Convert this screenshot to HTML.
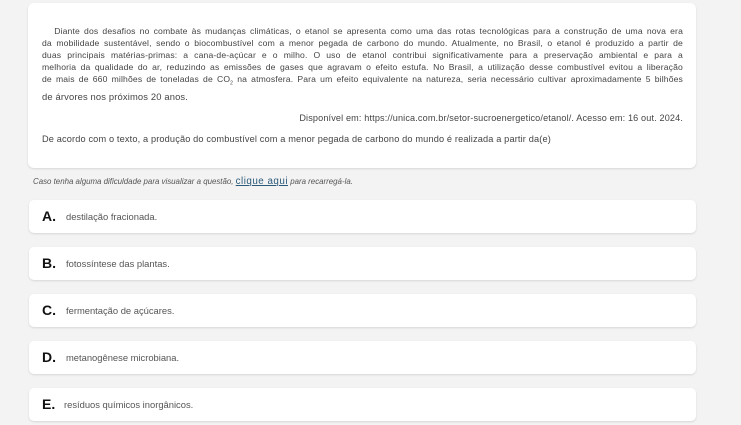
<!DOCTYPE html>
<html><head><meta charset="utf-8"><style>
body{margin:0;width:741px;height:425px;background:#f3f3f3;font-family:"Liberation Sans",sans-serif;color:#444;overflow:hidden;position:relative}
.card{position:absolute;left:28px;top:3px;width:668px;height:165px;background:#fff;border-radius:6px;box-shadow:0 1px 2px rgba(0,0,0,.12)}
.l{position:absolute;left:14px;width:641px;font-size:8.6px;letter-spacing:.15px;white-space:nowrap;text-align:justify;text-align-last:justify;line-height:10px}
.nj{text-align-last:left}
.note{position:absolute;left:33px;top:176px;font-size:7.9px;font-style:italic;color:#555}
.note a{color:#2a5a7a;font-style:normal;font-size:9.8px;text-decoration:underline;letter-spacing:.5px}
.opt{position:absolute;left:29px;width:667px;height:33px;background:#fff;border-radius:5px;box-shadow:0 1px 2px rgba(0,0,0,.12)}
.opt b{position:absolute;left:13px;top:8px;font-size:14px;color:#111}
.opt span{position:absolute;left:37px;top:11px;font-size:9.4px;color:#555}
</style></head><body>
<div class="card">
<div class="l" style="top:23px">&nbsp;&nbsp;&nbsp;Diante dos desafios no combate às mudanças climáticas, o etanol se apresenta como uma das rotas tecnológicas para a construção de uma nova era</div>
<div class="l" style="top:35px">da mobilidade sustentável, sendo o biocombustível com a menor pegada de carbono do mundo. Atualmente, no Brasil, o etanol é produzido a partir de</div>
<div class="l" style="top:47px">duas principais matérias-primas: a cana-de-açúcar e o milho. O uso de etanol contribui significativamente para a preservação ambiental e para a</div>
<div class="l" style="top:59px">melhoria da qualidade do ar, reduzindo as emissões de gases que agravam o efeito estufa. No Brasil, a utilização desse combustível evitou a liberação</div>
<div class="l" style="top:71px">de mais de 660 milhões de toneladas de CO<sub style="font-size:5px">2</sub> na atmosfera. Para um efeito equivalente na natureza, seria necessário cultivar aproximadamente 5 bilhões</div>
<div class="l nj" style="top:89px;font-size:9.4px">de árvores nos próximos 20 anos.</div>
<div class="l nj" style="top:110px;text-align:right;text-align-last:right;font-size:9.1px">Disponível em: https://unica.com.br/setor-sucroenergetico/etanol/. Acesso em: 16 out. 2024.</div>
<div class="l nj" style="top:131px;font-size:9.2px">De acordo com o texto, a produção do combustível com a menor pegada de carbono do mundo é realizada a partir da(e)</div>
</div>
<div class="note">Caso tenha alguma dificuldade para visualizar a questão, <a>clique aqui</a> para recarregá-la.</div>
<div class="opt" style="top:200px"><b>A.</b><span>destilação fracionada.</span></div>
<div class="opt" style="top:247px"><b>B.</b><span>fotossíntese das plantas.</span></div>
<div class="opt" style="top:294px"><b>C.</b><span>fermentação de açúcares.</span></div>
<div class="opt" style="top:341px"><b>D.</b><span>metanogênese microbiana.</span></div>
<div class="opt" style="top:388px"><b>E.</b><span style="left:35px">resíduos químicos inorgânicos.</span></div>
</body></html>
